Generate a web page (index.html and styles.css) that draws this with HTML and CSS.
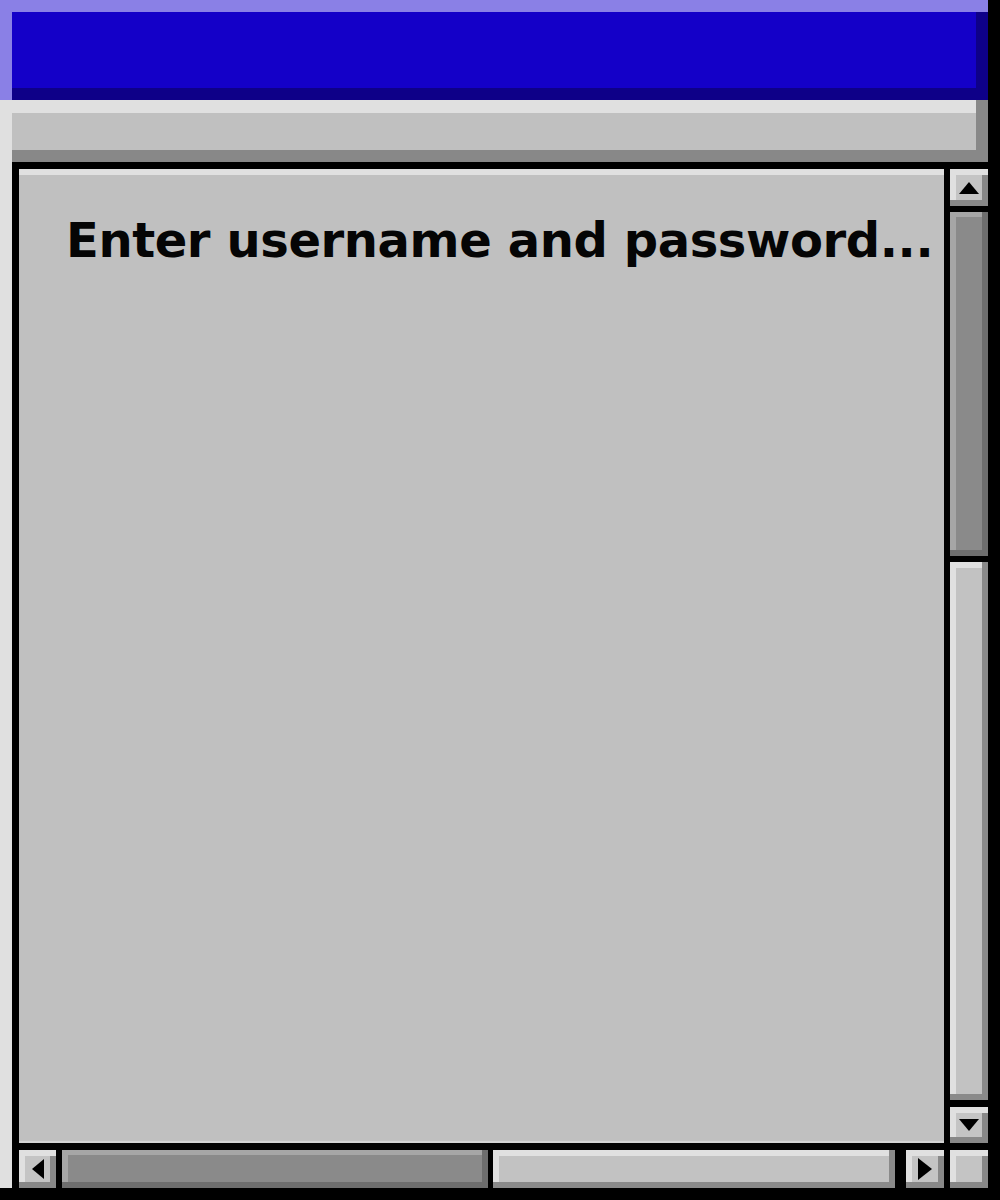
FILE: index.html
```html
<!DOCTYPE html>
<html lang="en">
<head>
<meta charset="utf-8">
<title>Login</title>
<link rel="stylesheet" href="styles.css">
</head>
<body>
<div class="window">
  <div class="titlebar"></div>
  <div class="frame">
    <div class="menubar"></div>
    <div class="body">
      <div class="content">
        <p class="prompt">Enter username and password...</p>
      </div>
      <div class="vscroll">
        <div class="btn btn-v">
          <svg width="20" height="12" viewBox="0 0 20 12"><polygon points="10,0 20,12 0,12" fill="#000"/></svg>
        </div>
        <div class="thumb vthumb"></div>
        <div class="track vtrack"></div>
        <div class="btn btn-v btn-down">
          <svg width="20" height="12" viewBox="0 0 20 12"><polygon points="0,0 20,0 10,12" fill="#000"/></svg>
        </div>
      </div>
      <div class="hscroll">
        <div class="btn btn-h btn-left">
          <svg width="12" height="20" viewBox="0 0 12 20"><polygon points="0,10 12,0 12,20" fill="#000"/></svg>
        </div>
        <div class="thumb hthumb"></div>
        <div class="track htrack"></div>
        <div class="btn btn-h btn-right">
          <svg width="14" height="22" viewBox="0 0 14 22"><polygon points="0,0 14,11 0,22" fill="#000"/></svg>
        </div>
      </div>
      <div class="btn corner"></div>
    </div>
  </div>
</div>
</body>
</html>
```

FILE: styles.css
```css
html, body {
  margin: 0;
  padding: 0;
  background: #000;
}

.window {
  width: 988px;
  height: 1188px;
  display: flex;
  flex-direction: column;
}

.titlebar {
  height: 100px;
  flex: none;
  background: #1400c8;
  box-shadow: inset 12px 12px 0 #8a80e6, inset -12px -12px 0 #0e0088;
}

.frame {
  flex: 1;
  display: flex;
  flex-direction: column;
  border-left: 12px solid #e0e0e0;
}

.menubar {
  height: 62px;
  flex: none;
  background: #c0c0c0;
  box-shadow: inset -12px -12px 0 #888888, inset 0 13px 0 #e0e0e0;
}

.body {
  flex: 1;
  background: #000;
  padding: 7px 0 0 7px;
  display: grid;
  grid-template-columns: 925px 38px;
  grid-template-rows: 974px 38px;
  column-gap: 6px;
  row-gap: 7px;
}

.content {
  box-sizing: border-box;
  background: #c0c0c0;
  border-top: 6px solid #e0e0e0;
  border-bottom: 2px solid #d2d2d2;
  padding: 41px 0 0 47px;
}

.prompt {
  margin: 0;
  font-family: "DejaVu Sans", sans-serif;
  font-weight: 700;
  font-size: 48px;
  line-height: 1;
  letter-spacing: -0.4px;
  color: #050505;
  white-space: nowrap;
}

.btn {
  box-sizing: border-box;
  background: #c4c4c4;
  display: flex;
  align-items: center;
  justify-content: center;
  box-shadow:
    inset 0 -6px 0 #888888,
    inset 0 6px 0 #e0e0e0,
    inset 6px 0 0 #e0e0e0,
    inset -6px 0 0 #888888;
}

.btn svg {
  display: block;
}

.vscroll {
  display: flex;
  flex-direction: column;
}

.btn-v {
  height: 37px;
  flex: none;
}

.btn-down {
  height: 36px;
  margin-top: 7px;
}

.thumb {
  box-sizing: border-box;
  background: #8a8a8a;
  box-shadow:
    inset 0 -6px 0 #6e6e6e,
    inset -6px 0 0 #6e6e6e,
    inset 0 5px 0 #a6a6a6,
    inset 6px 0 0 #a6a6a6;
}

.track {
  box-sizing: border-box;
  background: #c2c2c2;
  box-shadow:
    inset 0 -6px 0 #8a8a8a,
    inset -6px 0 0 #8a8a8a,
    inset 0 6px 0 #e0e0e0,
    inset 6px 0 0 #e0e0e0;
}

.vthumb {
  height: 344px;
  flex: none;
  margin-top: 6px;
}

.vtrack {
  flex: 1;
  margin-top: 6px;
}

.hscroll {
  display: flex;
  flex-direction: row;
}

.btn-h {
  flex: none;
  width: 37px;
}

.btn-right {
  width: 38px;
  margin-left: 11px;
}

.hthumb {
  width: 426px;
  flex: none;
  margin-left: 6px;
}

.htrack {
  flex: 1;
  margin-left: 5px;
}

.corner {
  width: 38px;
  height: 38px;
}
```
